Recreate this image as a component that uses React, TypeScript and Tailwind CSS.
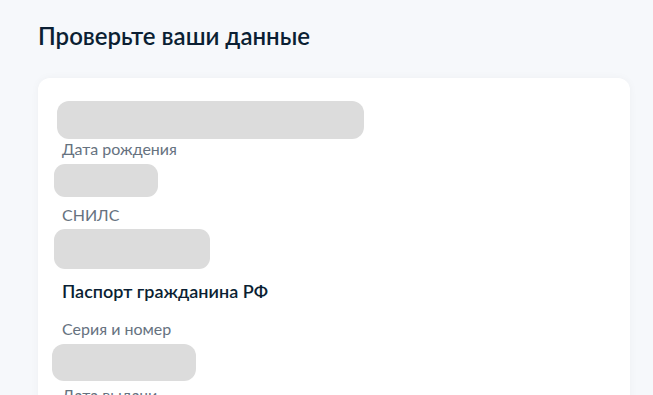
export default function App() {
  return (
    <div className="h-screen bg-[#f6f8fb] font-['Lato','Noto_Sans',sans-serif] overflow-hidden">
      <div className="pl-[38px] pr-[23px] pt-[20px]">
        <h1 className="text-[24px] leading-[32px] font-semibold text-[#0b1f33]">
          Проверьте ваши данные
        </h1>

        <div className="mt-[26px] bg-white rounded-[12px] shadow-[0_0_8px_rgba(0,0,0,0.04)] pt-[23px] pl-[24px] pb-8">
          <div className="ml-[-5px] w-[307px] h-[38px] rounded-[12px] bg-[#dcdcdc]" />
          <p className="text-[16px] leading-[20px] text-[#66727f]">Дата рождения</p>

          <div className="mt-[5px] ml-[-8px] w-[104px] h-[33px] rounded-[11px] bg-[#dcdcdc]" />
          <p className="mt-[8px] text-[16px] leading-[20px] text-[#66727f]">СНИЛС</p>

          <div className="mt-[4px] ml-[-8px] w-[156px] h-[40px] rounded-[11px] bg-[#dcdcdc]" />

          <p className="mt-[10px] text-[18px] leading-[24px] font-semibold text-[#0b1f33]">Паспорт гражданина РФ</p>
          <p className="mt-[16px] text-[16px] leading-[20px] text-[#66727f]">Серия и номер</p>

          <div className="mt-[5px] ml-[-10px] w-[144px] h-[37px] rounded-[12px] bg-[#dcdcdc]" />
          <p className="mt-[4px] text-[16px] leading-[20px] text-[#66727f]">Дата выдачи</p>
          <div className="mt-[5px] ml-[-8px] w-[120px] h-[36px] rounded-[12px] bg-[#dcdcdc]" />
        </div>
      </div>
    </div>
  );
}
